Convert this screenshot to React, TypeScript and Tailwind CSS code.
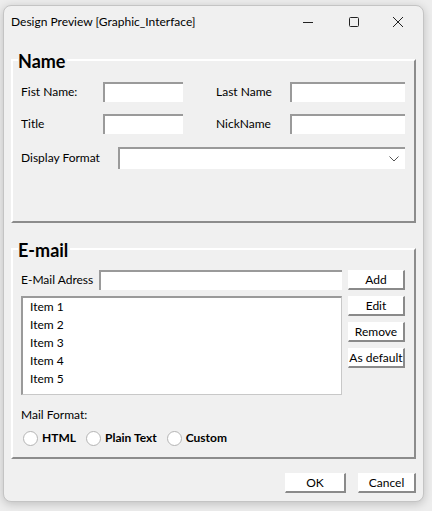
import React from 'react';

const font = { fontFamily: 'Lato, "Noto Sans", "Liberation Sans", sans-serif' };

const TextBox = ({ className = '' }: { className?: string }) => (
  <div className={`h-[20px] bg-white border-t-2 border-l-2 border-t-[#9a9a9a] border-l-[#9a9a9a] ${className}`} />
);

const Btn = ({ label, className = '' }: { label: string; className?: string }) => (
  <button
    className={`h-[20px] bg-white border-t border-l border-white border-r-2 border-b-2 border-r-[#8a8a8a] border-b-[#8a8a8a] text-[12px] leading-none text-black ${className}`}
  >
    {label}
  </button>
);

const Radio = ({ label }: { label: string }) => (
  <label className="flex items-center gap-[4px]">
    <span className="w-[15px] h-[15px] rounded-full bg-white border border-[#b4b4b4]" />
    <span className="font-bold text-[12px] text-black">{label}</span>
  </label>
);

const Group = ({ title, className = '', children }: { title: string; className?: string; children: React.ReactNode }) => (
  <div
    className={`relative border-t-2 border-l-2 border-white border-r-2 border-b-2 border-r-[#8c8c8c] border-b-[#8c8c8c] ${className}`}
  >
    <span className="absolute -top-[10px] left-[5px] bg-[#f0f0f0] pr-[2px] text-[18px] leading-[20px] font-bold text-black">
      {title}
    </span>
    {children}
  </div>
);

export default function App() {
  return (
    <div className="w-[432px] h-[511px] bg-[#ededed] pt-[5px] pl-[3px]" style={font}>
      <div className="w-[421px] h-[497px] rounded-[8px] border border-[#c4c4c4] bg-[#f0f0f0] shadow-[0_2px_10px_rgba(0,0,0,0.2)] flex flex-col">
        {/* title bar */}
        <div className="h-[32px] flex items-center pl-[7px] text-[12px] text-black">
          <span className="flex-1">Design Preview [Graphic_Interface]</span>
          <div className="flex items-center h-full">
            <div className="w-[46px] h-full flex items-center justify-center">
              <svg width="12" height="12" viewBox="0 0 12 12"><path d="M1 6.5h10" stroke="#222" strokeWidth="1" /></svg>
            </div>
            <div className="w-[46px] h-full flex items-center justify-center">
              <svg width="12" height="12" viewBox="0 0 12 12"><rect x="1.5" y="1.5" width="9" height="9" rx="1" fill="none" stroke="#222" strokeWidth="1" /></svg>
            </div>
            <div className="w-[46px] h-full flex items-center justify-center pr-[4px]">
              <svg width="12" height="12" viewBox="0 0 12 12"><path d="M1 1l10 10M11 1L1 11" stroke="#222" strokeWidth="1" /></svg>
            </div>
          </div>
        </div>

        <div className="px-[7px] pt-[21px] flex flex-col text-[12px] text-black">
          <Group title="Name" className="h-[164px] px-[8px] pt-[21px]">
            <div className="flex items-center">
              <span className="w-[82px]">Fist Name:</span>
              <TextBox className="w-[80px]" />
              <span className="w-[107px] pl-[33px]">Last Name</span>
              <TextBox className="w-[115px]" />
            </div>
            <div className="flex items-center mt-[12px]">
              <span className="w-[82px]">Title</span>
              <TextBox className="w-[80px]" />
              <span className="w-[107px] pl-[33px]">NickName</span>
              <TextBox className="w-[115px]" />
            </div>
            <div className="flex items-center mt-[13px]">
              <span className="w-[97px]">Display Format</span>
              <div className="w-[287px] h-[22px] bg-white border-t-2 border-l-2 border-[#9a9a9a] flex items-center justify-end pr-[6px]">
                <svg width="10" height="6" viewBox="0 0 10 6"><path d="M0.5 0.5L5 5l4.5-4.5" fill="none" stroke="#555" strokeWidth="1" /></svg>
              </div>
            </div>
          </Group>

          <Group title="E-mail" className="mt-[25px] h-[211px] px-[8px] pt-[20px]">
            <div className="flex items-center">
              <span className="w-[78px]">E-Mail Adress</span>
              <TextBox className="w-[243px]" />
              <Btn label="Add" className="ml-[6px] w-[57px]" />
            </div>
            <div className="flex mt-[6px]">
              <div className="w-[321px] h-[99px] bg-white border-t-2 border-l-2 border-[#9a9a9a] border-r border-b border-r-[#c8c8c8] border-b-[#c8c8c8] pl-[7px]">
                {['Item 1', 'Item 2', 'Item 3', 'Item 4', 'Item 5'].map((it) => (
                  <div key={it} className="leading-[18px]">{it}</div>
                ))}
              </div>
              <div className="ml-[6px] flex flex-col gap-[6px]">
                <Btn label="Edit" className="w-[57px]" />
                <Btn label="Remove" className="w-[57px]" />
                <Btn label="As default" className="w-[57px] whitespace-nowrap" />
              </div>
            </div>
            <div className="mt-[11px] leading-[18px]">Mail Format:</div>
            <div className="flex items-center gap-[10px] mt-[5px] pl-[2px]">
              <Radio label="HTML" />
              <Radio label="Plain Text" />
              <Radio label="Custom" />
            </div>
          </Group>

          <div className="flex justify-end gap-[12px] mt-[14px]">
            <Btn label="OK" className="w-[61px] h-[19px]" />
            <Btn label="Cancel" className="w-[58px] h-[19px]" />
          </div>
        </div>
      </div>
    </div>
  );
}
